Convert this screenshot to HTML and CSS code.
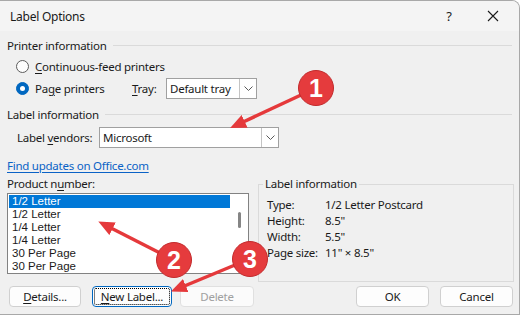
FILE: index.html
```html
<!DOCTYPE html>
<html lang="en">
<head>
  <meta charset="UTF-8" />
  <title>Label Options</title>
  <link rel="stylesheet" href="styles.css">
</head>
<body>
  <div class="window">
    <!-- Title bar -->
    <div class="titlebar">
      <span class="title">Label Options</span>
      <span class="help">?</span>
      <span class="close">
        <svg width="12" height="12" viewBox="0 0 12 12"><path d="M1 1 L11 11 M11 1 L1 11" stroke="#1a1a1a" stroke-width="1.1" fill="none"/></svg>
      </span>
    </div>

    <div class="content">
      <!-- Printer information -->
      <div class="section-head"><span>Printer information</span><i class="rule"></i></div>
      <div class="radio-row first">
        <span class="radio"></span>
        <span><u>C</u>ontinuous-feed printers</span>
      </div>
      <div class="radio-row second">
        <span class="radio checked"></span>
        <span class="page-label">Pa<u>g</u>e printers</span>
        <span class="tray-label"><u>T</u>ray:</span>
        <div class="combo tray">
          <span class="combo-text">Default tray</span>
          <span class="combo-btn"><svg width="9" height="5" viewBox="0 0 9 5"><path d="M0.5 0.5 L4.5 4.5 L8.5 0.5" stroke="#5a5a5a" fill="none"/></svg></span>
        </div>
      </div>

      <!-- Label information -->
      <div class="section-head second"><span>Label information</span><i class="rule"></i></div>
      <div class="vendor-row">
        <span class="vendor-label">Label <u>v</u>endors:</span>
        <div class="combo vendor">
          <span class="combo-text">Microsoft</span>
          <span class="combo-btn"><svg width="9" height="5" viewBox="0 0 9 5"><path d="M0.5 0.5 L4.5 4.5 L8.5 0.5" stroke="#5a5a5a" fill="none"/></svg></span>
        </div>
      </div>
      <a class="link" href="#">Find updates on Office.com</a>

      <div class="lower">
        <div class="product">
          <div class="product-label">Product n<u>u</u>mber:</div>
          <div class="listbox">
            <ul class="items">
              <li class="selected">1/2 Letter</li>
              <li>1/2 Letter</li>
              <li>1/4 Letter</li>
              <li>1/4 Letter</li>
              <li>30 Per Page</li>
              <li>30 Per Page</li>
            </ul>
            <div class="scrollbar"><i class="thumb"></i></div>
          </div>
        </div>

        <fieldset class="info">
          <legend>Label information</legend>
          <div class="info-grid">
            <span>Type:</span><span>1/2 Letter Postcard</span>
            <span>Height:</span><span>8.5"</span>
            <span>Width:</span><span>5.5"</span>
            <span>Page size:</span><span>11" × 8.5"</span>
          </div>
        </fieldset>
      </div>

      <!-- Buttons -->
      <div class="buttons">
        <button class="btn details"><u>D</u>etails...</button>
        <button class="btn new focused"><u>N</u>ew Label...</button>
        <button class="btn delete" disabled>Delete</button>
        <button class="btn ok">OK</button>
        <button class="btn cancel">Cancel</button>
      </div>
    </div>

    <!-- Callouts drawn over the dialog -->
    <svg class="annotations" width="522" height="317" viewBox="0 0 522 317">
      <defs>
        <marker id="head" markerUnits="userSpaceOnUse" markerWidth="16" markerHeight="14" refX="4" refY="7" orient="auto">
          <path d="M0 0 L16 7 L0 14 Z" fill="#e5393b"/>
        </marker>
      </defs>
      <g stroke="#e5393b" stroke-width="3.5" fill="none">
        <line x1="301" y1="95" x2="241" y2="123" marker-end="url(#head)"/>
        <line x1="160" y1="253" x2="109" y2="227" marker-end="url(#head)"/>
        <line x1="235" y1="265" x2="182" y2="287" marker-end="url(#head)"/>
      </g>
      <g class="badge">
        <circle cx="316" cy="88" r="17.5"/>
        <text x="316" y="97">1</text>
      </g>
      <g class="badge">
        <circle cx="174" cy="260" r="17.5"/>
        <text x="174" y="269">2</text>
      </g>
      <g class="badge">
        <circle cx="250" cy="259" r="17.5"/>
        <text x="250" y="268">3</text>
      </g>
    </svg>
  </div>
</body>
</html>
```

FILE: styles.css
```css
* {
  margin: 0;
  padding: 0;
  box-sizing: border-box;
}

body {
  background: #ffffff;
  font-family: 'Segoe UI', 'Noto Sans', sans-serif;
  font-size: 11.5px;
  letter-spacing: -0.25px;
  color: #1a1a1a;
}

u {
  text-decoration-thickness: 1px;
  text-underline-offset: 2px;
}

.window {
  position: relative;
  width: 520px;
  height: 315px;
  background: #f0f0f0;
  border: 1px solid #a8a8a8;
  border-left: none;
  border-top-right-radius: 8px;
  overflow: hidden;
}

/* Title bar */
.titlebar {
  display: flex;
  align-items: center;
  height: 30px;
  background: #f4f4f4;
  padding-left: 10px;
}

.title {
  flex: 1;
  font-size: 12px;
}

.help {
  width: 16px;
  text-align: center;
  font-size: 13px;
  margin-right: 30px;
}

.close {
  display: flex;
  margin-right: 20px;
}

.content {
  padding-left: 7px;
  padding-right: 5px;
}

/* Section headings with a rule */
.section-head {
  display: flex;
  align-items: center;
  height: 16px;
  margin-top: 6px;
  font-size: 11.5px;
}

.section-head.second {
  margin-top: 7px;
}

.section-head .rule {
  flex: 1;
  height: 1px;
  background: #dadada;
  margin-left: 6px;
  margin-right: 2px;
}

/* Radios */
.radio-row {
  display: flex;
  align-items: center;
  white-space: nowrap;
}

.radio-row.first {
  height: 16px;
  margin-top: 5px;
}

.radio-row.second {
  height: 21px;
  margin-top: 4px;
}

.radio {
  width: 13px;
  height: 13px;
  border: 1px solid #5c5c5c;
  border-radius: 50%;
  background: #fdfdfd;
  margin-left: 9px;
  margin-right: 6px;
}

.radio.checked {
  background: #0067c0;
  border-color: #0067c0;
  display: flex;
  align-items: center;
  justify-content: center;
}

.radio.checked::after {
  content: '';
  width: 5px;
  height: 5px;
  border-radius: 50%;
  background: #fff;
}

.page-label {
  width: 97px;
}

.tray-label {
  width: 34px;
}

/* Combo boxes */
.combo {
  display: flex;
  height: 21px;
  background: #fff;
  border: 1px solid #a0a0a0;
}

.combo.tray {
  width: 91px;
}

.combo.vendor {
  width: 180px;
}

.combo-text {
  flex: 1;
  padding-left: 3px;
  line-height: 19px;
  white-space: nowrap;
}

.combo-btn {
  width: 17px;
  border-left: 1px solid #c4c4c4;
  display: flex;
  align-items: center;
  justify-content: center;
}

.vendor-row {
  display: flex;
  align-items: center;
  height: 21px;
  margin-top: 5px;
}

.vendor-label {
  width: 82px;
  margin-left: 10px;
  white-space: nowrap;
}

.link {
  display: block;
  margin-top: 10px;
  line-height: 16px;
  color: #0a62c6;
  text-decoration: underline;
  text-underline-offset: 2px;
  width: max-content;
}

/* Product list and info box */
.lower {
  display: grid;
  grid-template-columns: 242px 256px;
  column-gap: 9px;
  margin-top: 2px;
}

.product-label {
  line-height: 16px;
}

.listbox {
  display: flex;
  height: 81px;
  margin-top: 1px;
  border: 1px solid #828282;
  background: #fff;
}

.items {
  list-style: none;
  flex: 1;
  padding: 1px;
  font-family: 'Liberation Sans', Arial, sans-serif;
  font-size: 11.5px;
  letter-spacing: 0;
}

.items li {
  height: 13px;
  line-height: 13px;
  padding-left: 3px;
}

.items li.selected {
  background: #0078d7;
  color: #fff;
}

.scrollbar {
  width: 17px;
  padding-top: 18px;
  display: flex;
  justify-content: center;
}

.thumb {
  width: 3px;
  height: 16px;
  border-radius: 2px;
  background: #858585;
}

.info {
  height: 106px;
  border: 1px solid #dadada;
  padding: 0 0 0 8px;
}

.info legend {
  margin-left: -4px;
  padding: 0 2px;
  line-height: 16px;
}

.info-grid {
  display: grid;
  grid-template-columns: 58px auto;
  grid-auto-rows: 16px;
  align-items: center;
  margin-top: 4px;
  white-space: nowrap;
}

/* Buttons */
.buttons {
  display: flex;
  margin-top: 4px;
  padding-left: 2px;
}

.btn {
  height: 21px;
  font-family: inherit;
  font-size: 11.5px;
  letter-spacing: -0.25px;
  color: #1a1a1a;
  background: #fdfdfd;
  border: 1px solid #d0d0d0;
  border-radius: 4px;
}

.btn.details {
  width: 72px;
}

.btn.new {
  width: 80px;
  margin-left: 11px;
}

.btn.focused {
  border-color: #0067c0;
  outline: 1px dotted #000;
  outline-offset: -3px;
}

.btn.delete {
  width: 74px;
  margin-left: 8px;
  color: #a0a0a0;
  background: #fbfbfb;
  border-color: #e0e0e0;
}

.btn.ok {
  width: 73px;
  margin-left: auto;
}

.btn.cancel {
  width: 73px;
  margin-left: 11px;
  margin-right: 1px;
}

/* Callouts */
.annotations {
  position: absolute;
  top: -1px;
  left: 0;
  pointer-events: none;
}

.badge circle {
  fill: #e53b3d;
  stroke: #c22a2c;
  stroke-width: 1;
}

.badge text {
  fill: #fff;
  font-family: 'Liberation Sans', Arial, sans-serif;
  font-weight: bold;
  font-size: 25px;
  letter-spacing: 0;
  text-anchor: middle;
}
```
